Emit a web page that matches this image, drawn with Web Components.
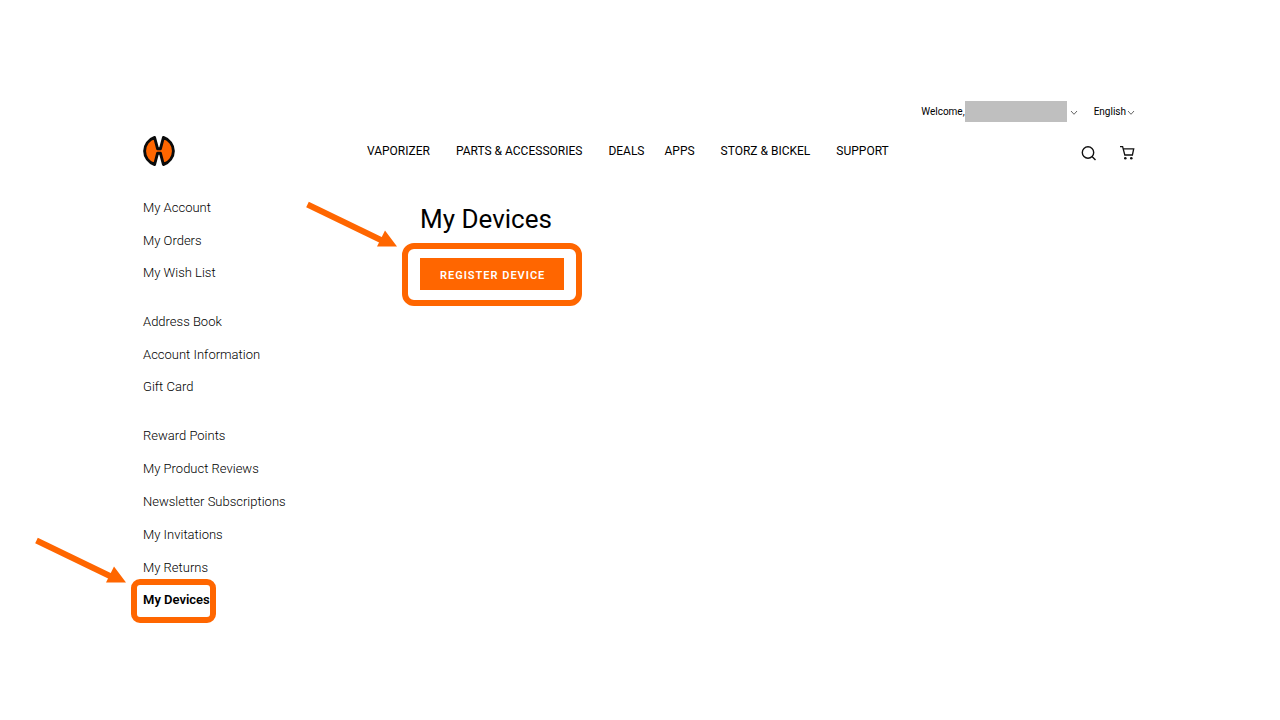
<!DOCTYPE html>
<html lang="en">
<head>
<meta charset="utf-8">
<title>My Devices</title>
<style>
body { margin: 0; background: #fff; color: #000; font-family: Roboto, sans-serif; }
</style>
</head>
<body>
<account-page></account-page>
<script>
const define = (name, html) => {
  const tpl = document.createElement('template');
  tpl.innerHTML = html;
  customElements.define(name, class extends HTMLElement {
    constructor() {
      super();
      this.attachShadow({ mode: 'open' }).append(tpl.content.cloneNode(true));
    }
  });
};

define('chevron-icon', `
<style>:host { display: block; } svg { display: block; }</style>
<svg width="8" height="6" viewBox="0 0 8 6" fill="none" stroke="#666" aria-hidden="true"><path d="M1 1l3 3.3L7 1"/></svg>`);

define('brand-logo', `
<style>:host { display: block; } a, svg { display: block; }</style>
<a href="#" aria-label="Storz &amp; Bickel">
<svg width="32" height="32" viewBox="1 0 32 32" aria-hidden="true">
<path d="M12.600 2.500C6.500 4.500 2.600 10 2.600 16S6.500 27.500 12.600 29.500L15.600 18.200H18.400L21.400 29.500C27.500 27.500 31.400 22 31.400 16S27.500 4.500 21.400 2.500L18.400 13.800H15.600Z" fill="#f60" stroke="#0b0b0b" stroke-width="2.900" stroke-linejoin="round"/>
</svg></a>`);

define('top-bar', `
<style>
:host { display: flex; justify-content: flex-end; align-items: center; height: 21px; font-size: 10px; line-height: 21px; }
button { all: unset; display: flex; align-items: center; gap: 1px; cursor: pointer; }
.user { gap: 3px; margin-right: 16px; }
.who { display: flex; }
.name { width: 102px; height: 21px; background: #bfbfbf; }
chevron-icon { margin-top: 3px; }
</style>
<button class="user" type="button"><span class="who"><span>Welcome,</span><span class="name"></span></span><chevron-icon></chevron-icon></button>
<button type="button"><span>English</span><chevron-icon></chevron-icon></button>`);

define('main-nav', `
<style>
:host { display: block; }
nav { display: flex; gap: 26px; font-size: 12px; line-height: 16px; white-space: nowrap; }
a { color: inherit; text-decoration: none; }
.tight { margin-right: -6px; }
</style>
<nav aria-label="Main">
<a href="#">VAPORIZER</a><a href="#">PARTS &amp; ACCESSORIES</a><a href="#" class="tight">DEALS</a><a href="#">APPS</a><a href="#">STORZ &amp; BICKEL</a><a href="#">SUPPORT</a>
</nav>`);

define('header-tools', `
<style>
:host { display: flex; gap: 24px; margin-left: auto; }
button { all: unset; cursor: pointer; }
svg { display: block; }
</style>
<button type="button" aria-label="Search"><svg width="15" height="16" viewBox="0 0 15 16" fill="none" stroke="#111" stroke-width="1.400"><circle cx="7" cy="7.500" r="5.700"/><path d="M11 11.500l3.500 3.500"/></svg></button>
<button type="button" aria-label="Cart"><svg width="15" height="16" viewBox="0 0 15 16" fill="none" stroke="#111" stroke-width="1.300"><path d="M0 1.700h2.600l2.200 8.300h7.600l1.300-6.200H3.200"/><circle cx="5.300" cy="13.200" r="1.300" fill="#111" stroke="none"/><circle cx="11.300" cy="13.200" r="1.300" fill="#111" stroke="none"/></svg></button>`);

define('site-header', `
<style>
:host { display: block; }
.row { display: flex; align-items: center; height: 32px; margin-top: 13px; }
main-nav { margin-left: 192px; }
header-tools { padding-top: 3px; }
</style>
<header><top-bar></top-bar><div class="row"><brand-logo></brand-logo><main-nav></main-nav><header-tools></header-tools></div></header>`);

/* Wraps its content in a highlight ring with an arrow pointing at the corner. */
define('call-out', `
<style>
:host { display: block; position: relative; width: fit-content; }
.ring { position: absolute; inset: var(--ring-inset); border: 6px solid #f60; border-radius: var(--ring-radius); pointer-events: none; }
svg { position: absolute; right: 100%; top: -48px; margin-right: 11px; }
</style>
<slot></slot>
<div class="ring"><svg width="92" height="48" viewBox="0 0 92 48" aria-hidden="true"><path d="M2.500 3.500L78 40" stroke="#f60" stroke-width="6"/><path d="M80 29.500L92 45.500L72 45.500Z" fill="#f60"/></svg></div>`);

define('side-nav', `
<style>
:host { display: block; }
ul { list-style: none; margin: 0 0 16px; padding: 0; font-size: 13px; font-weight: 300; line-height: 33px; }
li { height: 33px; }
li:last-child { height: 32px; line-height: 32px; }
a { display: block; width: fit-content; color: #000; text-decoration: none; white-space: nowrap; }
a[aria-current] { font-weight: 600; }
call-out { --ring-inset: -5px -6px -7px -12px; --ring-radius: 9px; }
</style>
<nav aria-label="Account">
<ul><li><a href="#">My Account</a></li><li><a href="#">My Orders</a></li><li><a href="#">My Wish List</a></li></ul>
<ul><li><a href="#">Address Book</a></li><li><a href="#">Account Information</a></li><li><a href="#">Gift Card</a></li></ul>
<ul><li><a href="#">Reward Points</a></li><li><a href="#">My Product Reviews</a></li><li><a href="#">Newsletter Subscriptions</a></li><li><a href="#">My Invitations</a></li><li><a href="#">My Returns</a></li><li><call-out><a href="#" aria-current="page">My Devices</a></call-out></li></ul>
</nav>`);

define('device-panel', `
<style>
:host { display: block; }
h1 { margin: 0 0 23px; font-size: 26px; line-height: 32px; font-weight: 400; }
button { display: block; height: 32px; padding: 4px 19px 0 20px; border: 0; background: #f60; color: #fff; font: 600 11px/28px Roboto, sans-serif; letter-spacing: 1px; cursor: pointer; }
call-out { --ring-inset: -15px -18px -16px -18px; --ring-radius: 12px; }
</style>
<h1>My Devices</h1>
<call-out><button type="button">REGISTER DEVICE</button></call-out>`);

define('account-page', `
<style>
:host { display: block; padding: 101px 145px 40px 143px; }
.columns { display: grid; grid-template-columns: 277px 1fr; margin-top: 24px; }
device-panel { padding-top: 12px; }
</style>
<site-header></site-header>
<main class="columns"><side-nav></side-nav><device-panel></device-panel></main>`);
</script>
</body>
</html>
